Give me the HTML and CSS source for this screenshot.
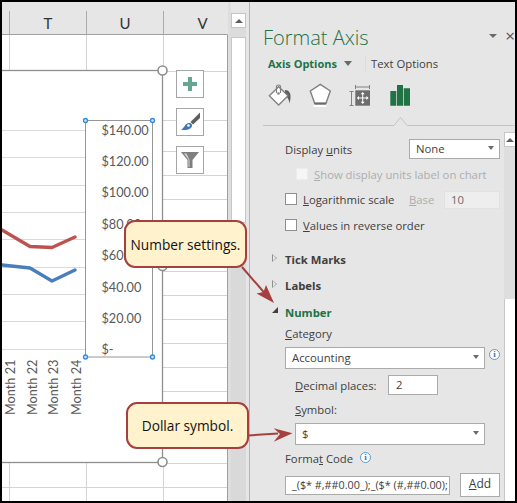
FILE: index.html
```html
<!DOCTYPE html>
<html lang="en">
<head>
    <meta charset="UTF-8">
    <title>Format Axis</title>
    <link rel="stylesheet" href="styles.css">
</head>
<body>
<div class="window">

    <div class="sheet">
        <div class="col-heads">
            <div class="col-head col-stub"></div>
            <div class="col-head">T</div>
            <div class="col-head">U</div>
            <div class="col-head col-last">V</div>
        </div>

        <!-- viewBox uses page coordinates -->
        <svg class="canvas" width="226" height="467" viewBox="2 34 226 467">
            <path class="sheet-edge" d="M2 34.500H227.500V501"/>
            <g class="grid">
                <path d="M9.5 35V70M86.5 35V70M9.5 463V501M86.5 463V501M163.5 35V70M163.5 463V501"/>
                <path d="M163 71.5H227M163 120.5H227M163 151.5H227M163 175.5H227M163 199.5H227M163 223.5H227M163 247.5H227M163 271.5H227M163 295.5H227M163 319.5H227M163 343.5H227M163 367.5H227M163 391.5H227M163 463.5H227M2 487.5H227"/>
            </g>
            <rect class="chart" x="-4" y="70.5" width="166.5" height="392"/>
            <path class="chart-grid" d="M2 130.5H85M2 157.5H85M2 185.5H85M2 212.5H85M2 239.5H85M2 267.5H85M2 294.5H85M2 321.5H85M2 349.5H85"/>
            <polyline class="line line-red" points="2,230 30,246.5 52,247.5 75,237"/>
            <polyline class="line line-blue" points="2,265 30,268 52,281 75,270"/>

            <rect class="axis-box" x="85.5" y="120.5" width="67" height="236.5"/>
            <text class="axis-label" x="101.5" y="135">$140.00</text>
            <text class="axis-label" x="101.5" y="166">$120.00</text>
            <text class="axis-label" x="101.5" y="197">$100.00</text>
            <text class="axis-label" x="101.5" y="229">$80.00</text>
            <text class="axis-label" x="101.5" y="260">$60.00</text>
            <text class="axis-label" x="101.5" y="292">$40.00</text>
            <text class="axis-label" x="101.5" y="323">$20.00</text>
            <text class="axis-label" x="101.5" y="354">$-</text>

            <text class="axis-label" transform="translate(15 415) rotate(-90)">Month 21</text>
            <text class="axis-label" transform="translate(36.500 415) rotate(-90)">Month 22</text>
            <text class="axis-label" transform="translate(58 415) rotate(-90)">Month 23</text>
            <text class="axis-label" transform="translate(80.500 415) rotate(-90)">Month 24</text>

            <circle class="dot" cx="85.5" cy="120.5" r="2"/>
            <circle class="dot" cx="152.5" cy="120.5" r="2"/>
            <circle class="dot" cx="85.5" cy="357" r="2"/>
            <circle class="dot" cx="152.5" cy="357" r="2"/>

            <circle class="handle" cx="162.5" cy="70.5" r="4.5"/>
            <circle class="handle" cx="162.5" cy="266" r="4.5"/>
            <circle class="handle" cx="162.5" cy="462" r="4.5"/>
        </svg>

        <div class="chart-tools">
            <div class="tool">
                <svg width="26" height="26" viewBox="0 0 26 26">
                    <path fill="#66a58f" d="M11 6h4v5h5v4h-5v5h-4v-5H6v-4h5z"/>
                </svg>
            </div>
            <div class="tool">
                <svg width="26" height="26" viewBox="0 0 26 26">
                    <path fill="#5f5f5f" d="M23 3.5V9l-7 6.5-2.5-2.5z"/>
                    <path fill="#3f76b5" d="M4 21c3-1.500 4-6.500 7.500-7 3-.3 4.500 2 3 4.200C13 20.800 8.500 21.300 4 21z"/>
                    <circle fill="#fff" cx="11.500" cy="16.500" r="1.300"/>
                </svg>
            </div>
            <div class="tool">
                <svg width="26" height="26" viewBox="0 0 26 26">
                    <path fill="#7f7f7f" d="M4 5h18l-6.500 8v8h-5v-8z"/>
                    <path fill="#d4d4d4" d="M7 6.500h2.500l3 6.500v7h-1v-7.500z"/>
                </svg>
            </div>
        </div>
    </div>

    <div class="vscroll">
        <div class="sb-btn"><span class="sb-up"></span></div>
        <div class="sb-gap"></div>
        <div class="sb-thumb"></div>
    </div>

    <div class="panel">
        <div class="panel-head">
            <div class="panel-title">Format Axis</div>
            <span class="title-arrow"></span>
            <span class="title-close">×</span>
        </div>

        <div class="panel-tabs">
            <span class="tab-active">Axis Options</span>
            <span class="tab-arrow"></span>
            <span class="tab-sep"></span>
            <span class="tab-plain">Text Options</span>
        </div>

        <div class="panel-icons">
            <svg width="24" height="24" viewBox="0 0 24 24">
                <path fill="#5f5f5f" d="M17 7c4 0 6 3.500 5.500 8l-.8 5.500C20.800 16.500 19.500 14 17 12.500z"/>
                <path fill="#fff" stroke="#808080" stroke-width="1.300" d="M1.300 12.700 10.700 3.700 20 12.700 10.700 22z"/>
                <path fill="none" stroke="#808080" stroke-width="1.200" d="M8.500 10V3.500C8.500 1.500 12.500 1.500 12.500 3.500V10"/>
                <circle fill="#808080" cx="10.500" cy="10.500" r="1.300"/>
            </svg>
            <svg width="24" height="24" viewBox="0 0 24 24">
                <path fill="#fff" d="M6.500 21h11l1.500 3.500H5z"/>
                <path fill="#fff" stroke="#808080" stroke-width="1.400" d="M12.300 1.300 22.300 8 18 20.300H6.700L2.300 8z"/>
                <path stroke="#6a6a6a" stroke-width="2" d="M6.500 20.700H18"/>
            </svg>
            <svg width="24" height="24" viewBox="0 0 24 24">
                <rect fill="#6d6d6d" x="7.300" y="7.300" width="14.700" height="15.400"/>
                <path fill="none" stroke="#808080" d="M7.500 2V6M21.500 2V6M7.500 4H21.500M1.500 8.500H5.500M1.500 22.500H5.500M3.500 8.500V22.500"/>
                <path fill="none" stroke="#fff" d="M14.700 10.500V19.500M10 15H19.500"/>
                <path fill="#fff" d="M14.700 9l2 2.200h-4zM14.700 21l2-2.200h-4zM8.800 15l2.200-2v4zM20.600 15l-2.200-2v4z"/>
            </svg>
            <svg width="24" height="24" viewBox="0 0 24 24">
                <path fill="#217346" d="M2.300 8h6v14.700h-6zM9 2h6v20.700H9zM15.700 5.300H22v17.400h-6.300z"/>
            </svg>
        </div>

        <svg class="panel-rule" width="252" height="10" viewBox="0 0 252 10">
            <path fill="#e6e6e6" stroke="#c4c4c4" d="M0 9.500H131L137.500 1.500 144 9.500H252"/>
        </svg>

        <div class="panel-body">
            <div class="opts">
                <div class="row row-between">
                    <span>Display <u>u</u>nits</span>
                    <div class="select select-units"><span>None</span><i class="caret"></i></div>
                </div>
                <div class="row row-text mt-6 indent-sm muted">
                    <span class="check check-off"></span>
                    <span><u>S</u>how display units label on chart</span>
                </div>
                <div class="row row-text mt-5">
                    <span class="check"></span>
                    <span class="log-label"><u>L</u>ogarithmic scale</span>
                    <span class="base muted"><u>B</u>ase</span>
                    <div class="base-input">10</div>
                </div>
                <div class="row row-text mt-6">
                    <span class="check"></span>
                    <span><u>V</u>alues in reverse order</span>
                </div>

                <div class="row mt-13 section"><i class="tri"></i><b>Tick Marks</b></div>
                <div class="row mt-6 section"><i class="tri"></i><b>Labels</b></div>
                <div class="row mt-7 section section-open"><i class="tri-open"></i><b>Number</b></div>

                <div class="row row-text mt-2"><span><u>C</u>ategory</span></div>
                <div class="row-field mt-3">
                    <div class="select select-wide"><span>Accounting</span><i class="caret"></i></div>
                    <span class="info info-field">i</span>
                </div>
                <div class="row mt-6 indent">
                    <span class="dec-label"><u>D</u>ecimal places:</span>
                    <div class="dec-input">2</div>
                </div>
                <div class="row row-text mt-5 indent"><span><u>S</u>ymbol:</span></div>
                <div class="row-field mt-3 indent">
                    <div class="select select-symbol"><span>$</span><i class="caret"></i></div>
                </div>
                <div class="row row-text mt-4">
                    <span>Forma<u>t</u> Code</span>
                    <span class="info info-code">i</span>
                </div>
                <div class="row-code mt-4">
                    <div class="code-input">_($* #,##0.00_);_($* (#,##0.00);</div>
                    <div class="add-btn"><u>A</u>dd</div>
                </div>
            </div>
            <div class="panel-scroll">
                <div class="ps-btn"><span class="sb-up"></span></div>
                <div class="ps-track"></div>
                <div class="ps-thumb"></div>
            </div>
        </div>
    </div>

    <!-- callouts lie over the chart and panel -->
    <svg class="arrows" width="517" height="503" viewBox="0 0 517 503">
        <path class="arrow-line" d="M242 267 268 297"/>
        <path class="arrow-head" d="M274 303 266 285 263.500 292 256.500 293.500z"/>
        <path class="arrow-line" d="M248 435.500 278 433.500"/>
        <path class="arrow-head" d="M292.500 433.300 273.700 428.300 280 434 273.700 441.700z"/>
    </svg>
    <div class="callout callout-number">Number settings.</div>
    <div class="callout callout-dollar">Dollar symbol.</div>
</div>
</body>
</html>
```

FILE: styles.css
```css
* {
    box-sizing: border-box;
}

body {
    margin: 0;
    font-family: "Open Sans", Arial, sans-serif;
    font-size: 11.3px;
    color: #404040;
}

.window {
    width: 517px;
    height: 503px;
    border: 2px solid #000;
    background-color: #e6e6e6;
    display: flex;
    position: relative;
    overflow: hidden;
}

/* sheet */
.sheet {
    width: 226px;
    flex: none;
    padding-top: 9px;
    position: relative;
}

.col-heads {
    display: flex;
    height: 23px;
}

.col-head {
    width: 77px;
    flex: none;
    border-right: 1px solid #ababab;
    display: flex;
    align-items: center;
    justify-content: center;
    font-family: Lato, sans-serif;
    font-size: 15px;
    color: #333;
}

.col-stub {
    width: 8px;
}

.col-last {
    border-right: none;
}

.canvas {
    display: block;
    background-color: #fff;
}

.sheet-edge {
    fill: none;
    stroke: #a0a0a0;
}

.grid path {
    fill: none;
    stroke: #d4d4d4;
}

.chart {
    fill: #fff;
    stroke: #8f8f8f;
    stroke-width: 1.3;
}

.chart-grid {
    fill: none;
    stroke: #d9d9d9;
}

.line {
    fill: none;
    stroke-width: 3.3;
    stroke-linecap: round;
    stroke-linejoin: round;
}

.line-red {
    stroke: #bd5250;
}

.line-blue {
    stroke: #4a7ebb;
}

.axis-box {
    fill: #fff;
    stroke: #969696;
}

.axis-label {
    font-family: Lato, sans-serif;
    font-size: 12.7px;
    fill: #595959;
}

.dot {
    fill: #cfe5fa;
    stroke: #2f8ae0;
    stroke-width: 1.3;
}

.handle {
    fill: #fff;
    stroke: #8f8f8f;
    stroke-width: 1.6;
}

.chart-tools {
    position: absolute;
    left: 174px;
    top: 68px;
    display: flex;
    flex-direction: column;
    gap: 10px;
}

.tool {
    width: 28px;
    height: 28px;
    background-color: #fff;
    border: 1px solid #a6a6a6;
}

.tool svg {
    display: block;
}

/* sheet scrollbar */
.vscroll {
    width: 22px;
    flex: none;
    padding: 11px 3px 0;
    border-right: 1px solid #b4b4b4;
    display: flex;
    flex-direction: column;
    background: linear-gradient(to right, #dedede 3px, #e6e6e6 3px);
    position: relative;
}

.sb-btn {
    height: 15px;
    background-color: #fff;
    border: 1px solid #c6c6c6;
    display: flex;
    align-items: center;
    justify-content: center;
}

.sb-up {
    border-left: 4px solid transparent;
    border-right: 4px solid transparent;
    border-bottom: 4px solid #606060;
}

.sb-gap {
    height: 9px;
    background-color: #dcdcdc;
}

.sb-thumb {
    height: 186px;
    background-color: #fff;
    border: 1px solid #c6c6c6;
}

.vscroll::after {
    content: "";
    flex: 1;
    background-color: #d9d9d9;
}

/* format panel */
.panel {
    flex: 1;
    min-width: 0;
    display: flex;
    flex-direction: column;
    overflow: hidden;
}

.panel-head {
    display: flex;
    align-items: center;
    height: 26px;
    margin-top: 22px;
    padding-left: 13px;
}

.panel-title {
    font-size: 20px;
    font-weight: 300;
    color: #217346;
    width: 231px;
}

.title-arrow {
    border-left: 4.500px solid transparent;
    border-right: 4.500px solid transparent;
    border-top: 4px solid #6a6a6a;
    margin-top: -3px;
}

.title-close {
    font-size: 17px;
    color: #555;
    margin-left: 8px;
    margin-top: -4px;
}

.panel-tabs {
    display: flex;
    align-items: center;
    height: 16px;
    margin-top: 5px;
    padding-left: 18px;
}

.tab-active {
    font-size: 11px;
    font-weight: 700;
    color: #217346;
    width: 76px;
}

.tab-arrow {
    border-left: 4.500px solid transparent;
    border-right: 4.500px solid transparent;
    border-top: 5px solid #6a6a6a;
}

.tab-sep {
    width: 1px;
    height: 15px;
    background-color: #dcdcdc;
    margin: 0 5px 0 13px;
}

.panel-icons {
    display: flex;
    gap: 16px;
    margin-top: 12px;
    padding-left: 18px;
    height: 24px;
}

.panel-rule {
    display: block;
    margin: 9px 0 0 13px;
    flex: none;
}

.panel-body {
    flex: 1;
    display: flex;
}

.opts {
    width: 254px;
    flex: none;
    padding: 13px 4px 0 35px;
}

.row {
    display: flex;
    align-items: center;
    height: 20px;
    white-space: nowrap;
}

.row-text {
    padding-bottom: 2px;
}

.row-between {
    justify-content: space-between;
}

.mt-2 { margin-top: 2px; }
.mt-3 { margin-top: 3px; }
.mt-4 { margin-top: 4px; }
.mt-5 { margin-top: 5px; }
.mt-6 { margin-top: 6px; }
.mt-7 { margin-top: 7px; }
.mt-13 { margin-top: 13px; }

.indent {
    padding-left: 10px;
}

.indent-sm {
    padding-left: 11px;
}

.muted {
    color: #adadad;
}

.select {
    height: 20px;
    background-color: #fff;
    border: 1px solid #ababab;
    display: flex;
    align-items: center;
    justify-content: space-between;
    padding: 0 5px 2px 6px;
}

.select-units {
    width: 91px;
}

.select-wide {
    width: 200px;
    height: 22px;
}

.select-symbol {
    width: 190px;
    height: 22px;
}

.caret {
    border-left: 3.500px solid transparent;
    border-right: 3.500px solid transparent;
    border-top: 4px solid #6a6a6a;
}

.check {
    width: 12px;
    height: 12px;
    background-color: #fff;
    border: 1px solid #8f8f8f;
    margin-right: 6px;
}

.check-off {
    background-color: #f6f6f6;
    border-color: #ececec;
}

.log-label {
    width: 106px;
}

.base {
    width: 35px;
}

.base-input {
    width: 56px;
    height: 18px;
    margin-top: 2px;
    background-color: #eeeeee;
    border: 1px solid #e2e2e2;
    padding-left: 6px;
    line-height: 15px;
    color: #6a6a6a;
}

.section {
    position: relative;
}

.section b {
    font-weight: 700;
}

.section-open b {
    color: #217346;
}

.tri {
    position: absolute;
    left: -13px;
    top: 5px;
    border-left: 5px solid #8f8f8f;
    border-top: 4.500px solid transparent;
    border-bottom: 4.500px solid transparent;
}

.tri::after {
    content: "";
    position: absolute;
    left: -4px;
    top: -3px;
    border-left: 3px solid #e6e6e6;
    border-top: 3px solid transparent;
    border-bottom: 3px solid transparent;
}

.tri-open {
    position: absolute;
    left: -13px;
    top: 5px;
    border-left: 6px solid transparent;
    border-bottom: 6px solid #404040;
}

.row-field {
    display: flex;
    align-items: center;
}

.info {
    width: 11px;
    height: 11px;
    border: 1px solid #5b9bd5;
    border-radius: 50%;
    margin-left: 4px;
    background-color: #fff;
    color: #3f76b5;
    font-family: "Liberation Serif", serif;
    font-size: 9px;
    font-weight: 700;
    line-height: 9px;
    text-align: center;
}

.info-field {
    margin-top: -8px;
}

.info-code {
    margin-left: 7px;
    margin-top: -2px;
}

.dec-label {
    width: 93px;
}

.dec-input {
    width: 50px;
    height: 20px;
    background-color: #fff;
    border: 1px solid #ababab;
    padding-left: 7px;
    line-height: 17px;
}

.row-code {
    display: flex;
    align-items: center;
    height: 24px;
    white-space: nowrap;
}

.code-input {
    width: 165px;
    height: 19px;
    background-color: #fff;
    border: 1px solid #ababab;
    padding-left: 6px;
    line-height: 16px;
    font-size: 10.8px;
    overflow: hidden;
}

.add-btn {
    width: 40px;
    height: 24px;
    margin-left: 10px;
    background-color: #fff;
    border: 1px solid #ababab;
    line-height: 20px;
    text-align: center;
    font-size: 12px;
}

.panel-scroll {
    width: 11px;
    flex: none;
    margin-top: 6px;
    display: flex;
    flex-direction: column;
}

.ps-btn {
    height: 15px;
    background-color: #fff;
    border: 1px solid #c6c6c6;
    border-right: none;
    display: flex;
    align-items: center;
    justify-content: center;
}

.ps-track {
    height: 152px;
    background-color: #dedede;
}

.ps-thumb {
    flex: 1;
    background-color: #fff;
    border-left: 1px solid #c6c6c6;
}

/* callouts */
.arrows {
    position: absolute;
    left: -2px;
    top: -2px;
}

.arrow-line {
    fill: none;
    stroke: #a5403f;
    stroke-width: 2;
}

.arrow-head {
    fill: #a5403f;
}

.callout {
    position: absolute;
    width: 123px;
    display: flex;
    align-items: center;
    justify-content: center;
    background-color: #fff2cc;
    border: 2px solid #a5403f;
    border-radius: 11px;
    font-size: 13.7px;
    color: #111;
    white-space: nowrap;
}

.callout-number {
    left: 122px;
    top: 218px;
    height: 48px;
}

.callout-dollar {
    left: 124px;
    top: 400px;
    height: 47px;
}
```
